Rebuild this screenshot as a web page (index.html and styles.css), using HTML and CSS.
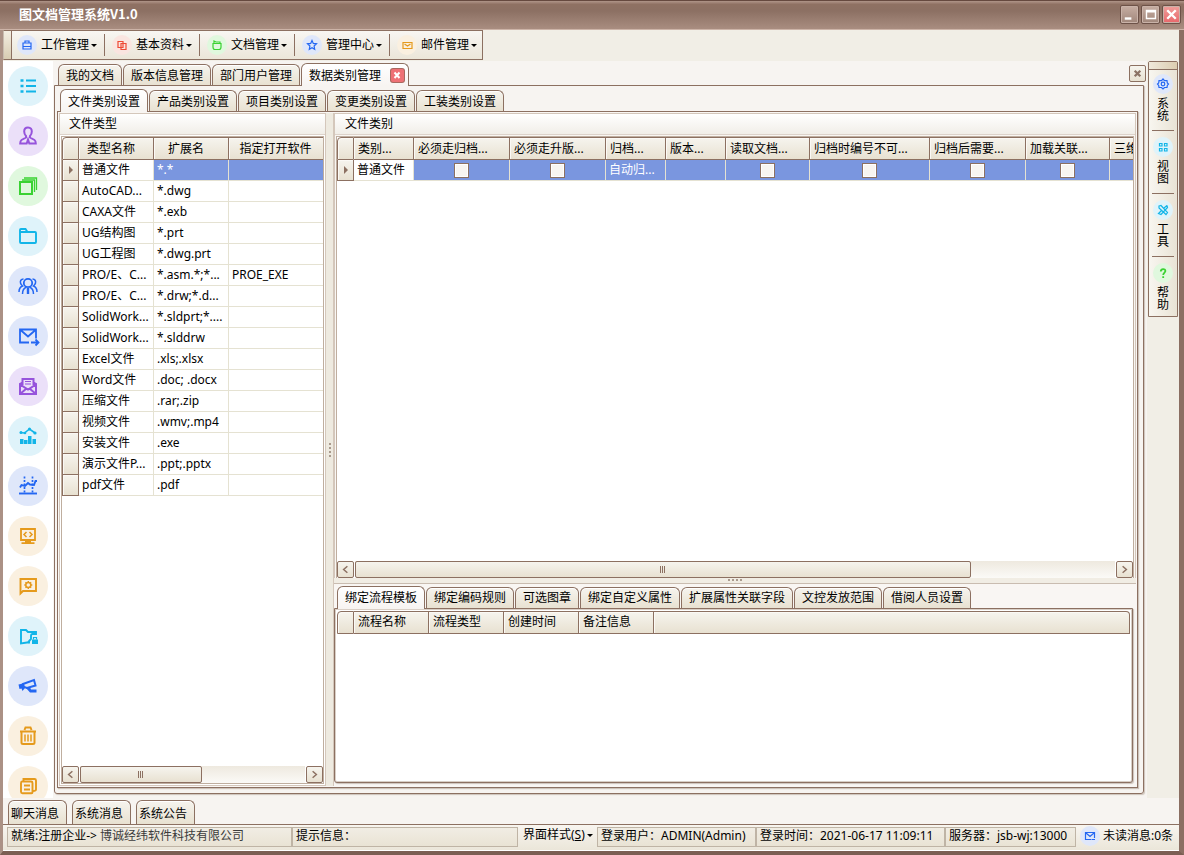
FILE: index.html
```html
<!DOCTYPE html>
<html lang="zh-CN">
<head>
<meta charset="utf-8">
<title>图文档管理系统V1.0</title>
<link rel="stylesheet" href="styles.css">
</head>
<body>
<div class="window">
<header class="titlebar">
  <h1 class="title">图文档管理系统V1.0</h1>
  <button class="winbtn" aria-label="最小化"><svg viewBox="0 0 18 18"><path d="M4 12h7v2.500H4z" fill="#fff"/></svg></button>
  <button class="winbtn" aria-label="最大化"><svg viewBox="0 0 18 18"><path d="M4 4h11v10H4zM5.500 7v5.500h8V7z" fill="#fff" fill-rule="evenodd"/></svg></button>
  <button class="winbtn winbtn-close" aria-label="关闭"><svg viewBox="0 0 18 18"><path d="M4.500 4.500l9 9M13.500 4.500l-9 9" stroke="#fff" stroke-width="2.500"/></svg></button>
</header>

<div class="menurow">
  <nav class="menubar">
    <span class="grip"></span>
    <button class="menu"><span class="dot blue"><svg viewBox="0 0 20 20"><path d="M6 8h8v6H6zM8 8V6h4v2M6 11.500h8"/></svg></span>工作管理<i class="caret"></i></button>
    <button class="menu"><span class="dot red"><svg viewBox="0 0 20 20"><path d="M6 6.500h5v6H6zM9 8.500h5v6H9z"/></svg></span>基本资料<i class="caret"></i></button>
    <button class="menu"><span class="dot green"><svg viewBox="0 0 20 20"><path d="M6 8.500h8v3.500q0 2.500-2 2.500H8q-2 0-2-2.500zM7 8V6l2 1h4v1"/></svg></span>文档管理<i class="caret"></i></button>
    <button class="menu"><span class="dot blue"><svg viewBox="0 0 20 20"><path d="M10 5.500l1.300 2.900 3.200.4-2.400 2.200.6 3.300-2.700-1.600-2.700 1.600.6-3.300-2.400-2.200 3.200-.4z"/></svg></span>管理中心<i class="caret"></i></button>
    <button class="menu"><span class="dot orange"><svg viewBox="0 0 20 20"><path d="M6 7.500h9v6H6zM7.500 9l3 2 3-2"/></svg></span>邮件管理<i class="caret"></i></button>
  </nav>
</div>

<div class="body">
<nav class="side">
  <button class="sico cyan" aria-label="列表"><svg viewBox="0 0 40 40"><path d="M18 14.500h10M18 20h10M18 25.500h10" stroke-width="2.200"/><path d="M12.500 14.500h3M12.500 20h3M12.500 25.500h3" stroke-width="2.600"/></svg></button>
  <button class="sico purple" aria-label="用户"><svg viewBox="0 0 40 40"><path d="M20 11.500c-2.800 0-3.800 1.800-3.800 4 0 2 .8 3.500 1.800 4.500v1.500l-4.500 2.500c-1 .6-1.300 1.500-1.300 3.500h6.500l1.300-4 1.300 4h6.500c0-2-.3-2.900-1.300-3.500L22 21.500V20c1-1 1.800-2.500 1.800-4.500 0-2.200-1-4-3.800-4z" stroke-width="2"/></svg></button>
  <button class="sico green" aria-label="图层"><svg viewBox="0 0 40 40"><path d="M12 16h12v12H12z" stroke-width="2"/><path d="M14 14h12.500v12M16 12h12.500v12" stroke-width="1.300"/></svg></button>
  <button class="sico cyan" aria-label="文件夹"><svg viewBox="0 0 40 40"><path d="M12 26V14q0-1 1-1h4.500l2 3H27q1 0 1 1v9q0 1-1 1H13q-1 0-1-1zM12 16h8" stroke-width="1.900"/></svg></button>
  <button class="sico blue" aria-label="团队"><svg viewBox="0 0 40 40"><circle cx="20" cy="17" r="4.200"/><path d="M14.500 28c0-3.500 1.500-6 4-7M25.500 28c0-3.500-1.500-6-4-7M15.500 13c-2.500 0-3.500 2-3 4 .2 1 1 2 2 3-2 .8-3.500 3-3.500 6M24.500 13c2.500 0 3.500 2 3 4-.2 1-1 2-2 3 2 .8 3.500 3 3.500 6" stroke-width="1.500"/><path d="M20 22v6" stroke-width="2.400"/></svg></button>
  <button class="sico blue" aria-label="发件"><svg viewBox="0 0 40 40"><path d="M28 22.500V13.500H12v13h9M12.500 14l7.500 6.500 7.500-6.500" stroke-width="1.800"/><path d="M23 26.500h7.500M27.500 23.500l3 3-3 3" stroke-width="1.800"/></svg></button>
  <button class="sico purple" aria-label="收件"><svg viewBox="0 0 40 40"><path d="M12 18.500V28h16v-9.500l-8 5zM12 28l6.500-5.500M28 28l-6.500-5.500M14.500 19v-6h11v6M12 18.500l2.500-2.500M28 18.500l-2.500-2.500" stroke-width="2"/><path d="M17 15.500h6M17 18h6" stroke-width="1.100"/></svg></button>
  <button class="sico cyan" aria-label="统计"><svg viewBox="0 0 40 40"><path d="M12 16.500l4.500 0.500 5-4 5.500 4" stroke-width="1.600"/><path class="solid" d="M12 28v-5h3.500v5zM16 28v-4h3.500v4zM20 28v-8h3.500v8zM24.500 28v-5H28v5z"/><circle class="solid" cx="13" cy="16.500" r="1.500"/><circle class="solid" cx="17" cy="17" r="1.300"/><circle class="solid" cx="21.500" cy="13" r="1.500"/><circle class="solid" cx="27" cy="17" r="1.600"/></svg></button>
  <button class="sico blue" aria-label="趋势"><svg viewBox="0 0 40 40"><path d="M11 27.500h18" stroke-width="1.900"/><path d="M12 21.500l1.500-2.500 3.500 1 3-3 2 1.500 4 .5 1.500-4H29" stroke-width="1.900"/><path d="M16.500 10.500v16M24.500 10.500v16" stroke-width="1.700" stroke-dasharray="2 1.500"/></svg></button>
  <button class="sico orange" aria-label="代码"><svg viewBox="0 0 40 40"><path d="M13 13h14v11H13z" stroke-width="1.800"/><path d="M18.500 16L16 18.500l2.500 2.500M21.500 16l2.500 2.500-2.500 2.500" stroke-width="1.500"/><path d="M17 25.500h6M13.500 27.200h13" stroke-width="1.700"/></svg></button>
  <button class="sico orange" aria-label="消息设置"><svg viewBox="0 0 40 40"><path d="M12.500 27.500V13H28v12H15z" stroke-width="1.900"/><circle cx="20.300" cy="19" r="2.500" stroke-width="1.500"/><path d="M20.300 15v1.500M20.300 21.500V23M16.300 19h1.500M22.800 19h1.500M17.500 16.200l1 1M22.100 20.800l1 1M23.100 16.200l-1 1M18.500 20.800l-1 1" stroke-width="1.400"/></svg></button>
  <button class="sico cyan" aria-label="加密文件夹"><svg viewBox="0 0 40 40"><path d="M22 26.500h-3l-6 1V14h5l2 2h8v2h-3.500q-1.500 0-1.500 2v3l-3.500 4" stroke-width="1.900"/><path class="solid" d="M24 23.500h6V28h-6z"/><path d="M25.500 23.500v-2h3v2" stroke-width="1.200"/></svg></button>
  <button class="sico blue" aria-label="监控"><svg viewBox="0 0 40 40"><path d="M15 18l11-4 1.500 5.500L19 22l-3-1z" stroke-width="2"/><path class="solid" d="M10.500 18.500l4.500-1 2 4.500-2.500 3-1-2.500-2 .5zM18 22l4-1 1 2.500h5.500v3H22z"/></svg></button>
  <button class="sico orange" aria-label="回收站"><svg viewBox="0 0 40 40"><path d="M12 15.500h16M16.500 14l1-2.500h5l1 2.500M13.500 16v10.500q0 1.500 1.500 1.500h10q1.500 0 1.500-1.500V16" stroke-width="2"/><path d="M17 18.500v7M20 18.500v7M23 18.500v7" stroke-width="1.500"/></svg></button>
  <button class="sico orange" aria-label="文档"><svg viewBox="0 0 40 40"><path d="M14 15.500h9q1.500 0 1.500 1.500v9.300q0 1-1 1h-9q-1.500 0-1.500-1.500v-8.500q0-1.800 1-1.800zM15.500 15v-2h11q1.500 0 1.500 1.500v9q0 1.500-3 1.500M16 19.500h6M16 23.500h6" stroke-width="1.900"/></svg></button>
</nav>

<main class="work">
  <div class="toprow">
    <div class="tabs">
      <button class="tab">我的文档</button><button class="tab">版本信息管理</button><button class="tab">部门用户管理</button><button class="tab active">数据类别管理<span class="tabx"><svg viewBox="0 0 13 13"><path d="M3.500 3.500l5 5.500M8.500 3.500l-5 5.500" stroke="#fff" stroke-width="2"/></svg></span></button>
    </div>
    <button class="closebtn" aria-label="关闭页签"><svg viewBox="0 0 16 16"><path d="M5 5l6 6M11 5l-6 6" stroke="#8c7365" stroke-width="2.400"/></svg></button>
  </div>
  <section class="page">
    <div class="tabs">
      <button class="tab active">文件类别设置</button><button class="tab">产品类别设置</button><button class="tab">项目类别设置</button><button class="tab">变更类别设置</button><button class="tab">工装类别设置</button>
    </div>
    <div class="panes">
      <section class="left">
        <h2 class="cap">文件类型</h2>
        <div class="gridbox">
          <table class="grid types">
            <colgroup><col class="c17"><col class="c75"><col class="c75"><col></colgroup>
            <thead><tr><th></th><th>类型名称</th><th>扩展名</th><th>指定打开软件</th></tr></thead>
            <tbody>
              <tr class="sel"><th><i class="arrow"></i></th><td class="focus">普通文件</td><td>*.*</td><td></td></tr>
              <tr><th></th><td>AutoCAD...</td><td>*.dwg</td><td></td></tr>
              <tr><th></th><td>CAXA文件</td><td>*.exb</td><td></td></tr>
              <tr><th></th><td>UG结构图</td><td>*.prt</td><td></td></tr>
              <tr><th></th><td>UG工程图</td><td>*.dwg.prt</td><td></td></tr>
              <tr><th></th><td>PRO/E、C...</td><td>*.asm.*;*...</td><td>PROE_EXE</td></tr>
              <tr><th></th><td>PRO/E、C...</td><td>*.drw;*.d...</td><td></td></tr>
              <tr><th></th><td>SolidWork...</td><td>*.sldprt;*....</td><td></td></tr>
              <tr><th></th><td>SolidWork...</td><td>*.slddrw</td><td></td></tr>
              <tr><th></th><td>Excel文件</td><td>.xls;.xlsx</td><td></td></tr>
              <tr><th></th><td>Word文件</td><td>.doc; .docx</td><td></td></tr>
              <tr><th></th><td>压缩文件</td><td>.rar;.zip</td><td></td></tr>
              <tr><th></th><td>视频文件</td><td>.wmv;.mp4</td><td></td></tr>
              <tr><th></th><td>安装文件</td><td>.exe</td><td></td></tr>
              <tr><th></th><td>演示文件P...</td><td>.ppt;.pptx</td><td></td></tr>
              <tr><th></th><td>pdf文件</td><td>.pdf</td><td></td></tr>
            </tbody>
          </table>
          <div class="scroll"><button class="sbtn" aria-label="向左"><svg viewBox="0 0 16 16"><path d="M10 4.500L6 8l4 3.500"/></svg></button><div class="track"><div class="thumb half"><i></i></div></div><button class="sbtn" aria-label="向右"><svg viewBox="0 0 16 16"><path d="M6 4.500L10 8l-4 3.500"/></svg></button></div>
        </div>
      </section>
      <div class="vsplit"><i></i></div>
      <section class="right">
        <div class="upper">
          <h2 class="cap">文件类别</h2>
          <div class="gridbox">
            <table class="grid cats">
              <colgroup><col class="c17"><col class="c60"><col class="c96"><col class="c96"><col class="c60"><col class="c60"><col class="c84"><col class="c120"><col class="c96"><col class="c84"><col></colgroup>
              <thead><tr><th></th><th>类别...</th><th>必须走归档...</th><th>必须走升版...</th><th>归档...</th><th>版本...</th><th>读取文档...</th><th>归档时编号不可...</th><th>归档后需要...</th><th>加载关联...</th><th>三维</th></tr></thead>
              <tbody><tr class="sel"><th><i class="arrow"></i></th><td class="focus">普通文件</td><td><input type="checkbox" aria-label="必须走归档"></td><td><input type="checkbox" aria-label="必须走升版"></td><td>自动归...</td><td></td><td><input type="checkbox" aria-label="读取文档"></td><td><input type="checkbox" aria-label="归档时编号不可"></td><td><input type="checkbox" aria-label="归档后需要"></td><td><input type="checkbox" aria-label="加载关联"></td><td></td></tr></tbody>
            </table>
            <div class="scroll"><button class="sbtn" aria-label="向左"><svg viewBox="0 0 16 16"><path d="M10 4.500L6 8l4 3.500"/></svg></button><div class="track"><div class="thumb wide"><i></i></div></div><button class="sbtn" aria-label="向右"><svg viewBox="0 0 16 16"><path d="M6 4.500L10 8l-4 3.500"/></svg></button></div>
          </div>
        </div>
        <div class="hsplit"><i></i></div>
        <div class="lower">
          <div class="tabs">
            <button class="tab active">绑定流程模板</button><button class="tab">绑定编码规则</button><button class="tab">可选图章</button><button class="tab">绑定自定义属性</button><button class="tab">扩展属性关联字段</button><button class="tab">文控发放范围</button><button class="tab">借阅人员设置</button>
          </div>
          <div class="flow">
            <table class="grid flows">
              <colgroup><col class="c17"><col class="c75"><col class="c75"><col class="c75"><col class="c75"><col></colgroup>
              <thead><tr><th></th><th>流程名称</th><th>流程类型</th><th>创建时间</th><th>备注信息</th><th></th></tr></thead>
            </table>
          </div>
        </div>
      </section>
    </div>
  </section>
</main>

<aside class="rail">
  <nav class="railbar">
    <span class="railgrip"></span>
    <button class="rbtn"><span class="dot blue"><svg viewBox="0 0 20 20"><path d="M10 5l1.500 1.700h2.500l.3 2.300L15.500 10l-1.200 1.500-.3 2h-2.500L10 15l-1.500-1.500H6l-.3-2L4.500 10l1.200-1L6 6.700h2.500z"/><circle cx="10" cy="10" r="1.800"/></svg></span><span class="vert">系统</span></button>
    <button class="rbtn"><span class="dot cyan"><svg viewBox="0 0 20 20"><path d="M6.500 6.500h2.500V9H6.500zM11.500 6.500H14V9h-2.500zM6.500 11.500h2.500V14H6.500zM11.500 11.500H14V14h-2.500z"/></svg></span><span class="vert">视图</span></button>
    <button class="rbtn"><span class="dot cyan"><svg viewBox="0 0 20 20"><path d="M6 6l2-.5 6.500 7-1.500 2L6 8zM14 5.500l.5 2L8 14.500l-2.500-1 3-3M11 8l3-2.500"/></svg></span><span class="vert">工具</span></button>
    <button class="rbtn"><span class="dot green"><svg viewBox="0 0 20 20"><path d="M7.800 8.500c0-3 4.600-3 4.600-.5 0 1.500-2.200 1.700-2.200 4M10.200 13.200V15" stroke-width="1.800"/></svg></span><span class="vert">帮助</span></button>
  </nav>
</aside>
</div>

<div class="msgs">
  <button class="tab">聊天消息</button><button class="tab">系统消息</button><button class="tab">系统公告</button>
</div>
<footer class="status">
  <span class="cell s1">就绪:注册企业-&gt; <span class="corp">博诚经纬软件科技有限公司</span></span>
  <span class="cell s2">提示信息：</span>
  <button class="skin">界面样式(<u>S</u>)<i class="caret"></i></button>
  <span class="cell s3">登录用户：ADMIN(Admin)</span>
  <span class="cell s4">登录时间：2021-06-17 11:09:11</span>
  <span class="cell s5">服务器：jsb-wj:13000</span>
  <button class="unread"><span class="dot blue"><svg viewBox="0 0 20 20"><path d="M14.500 12V6.500h-9v7h6M6 7l4 3.500L14 7M12 13.500h3"/></svg></span>未读消息:0条</button>
</footer>
</div>
</body>
</html>
```

FILE: styles.css
```css
* { box-sizing: border-box; }
:root {
  --line: #8c7061;
  --soft: #c9bcb0;
  --pale: #f7f4f1;
  --beige: #f1eee6;
  --face: linear-gradient(#f6f4ee, #e8e1d1);
}
body {
  margin: 0;
  height: 100vh;
  overflow: hidden;
  color: #000;
  font: 12px/16px "Noto Sans", "Noto Sans CJK SC", sans-serif;
}
button { font: inherit; color: inherit; margin: 0; padding: 0; border: 0; background: none; white-space: nowrap; }
h1, h2 { margin: 0; }
svg { display: block; fill: none; stroke: currentColor; }
.solid { fill: currentColor; stroke: none; }

.window {
  display: flex;
  flex-direction: column;
  height: 100%;
  background: var(--beige);
  border: solid #8b6e62;
  border-width: 0 5px 4px 3px;
  border-left-color: #ab9185;
  border-bottom-color: #7b5e53;
}

.titlebar {
  flex: none;
  display: flex;
  align-items: center;
  gap: 2px;
  height: 30px;
  margin: 0 -5px 0 -3px;
  padding: 0 3px 2px 19px;
  border-top: 1px solid #66493f;
  border-bottom: 1px solid #cdb4a8;
  background: linear-gradient(#b09589, #8f7163 12%, #8c7063 35%, #a98d80);
}
.title { flex: 1; color: #fff; font: bold 13px/18px "Noto Sans CJK SC", sans-serif; }
.winbtn { width: 19px; height: 19px; border: 1px solid #6d5248; border-radius: 2px; background: linear-gradient(#c6ada2, #a1877b); box-shadow: inset 0 0 0 1px #c9b2a8; }
.winbtn svg { width: 17px; height: 17px; stroke: none; }
.winbtn-close { background: linear-gradient(#f0a09c, #e8666a); }

.menurow { flex: none; height: 31px; display: flex; }
.menubar { display: flex; height: 30px; border: 1px solid var(--line); border-left-color: var(--soft); background: linear-gradient(#f8f6f2, #ebe6d9); }
.grip { width: 8px; border-right: 1px solid var(--line); background: linear-gradient(#f3eee2, #d8ccb2); }
.menu { display: flex; align-items: center; width: 95px; padding-left: 7px; position: relative; }
.menu:nth-child(2) { width: 93px; padding-left: 5px; }
.menu:last-child { width: 92px; }
.menu + .menu::before { content: ""; position: absolute; left: -1px; top: 3px; bottom: 3px; width: 1px; background: var(--line); }
.menu .dot { margin-right: 4px; }
.caret { margin-left: 2px; border: solid transparent; border-width: 3px 3px 0; border-top-color: #000; }
.dot { flex: none; width: 20px; height: 20px; border-radius: 50%; }
.dot svg { width: 20px; height: 20px; stroke-width: 1.2; }
.blue { color: #2467f2; background: #dfe7fa; }
.red { color: #ee4a35; background: #fae5e0; }
.green { color: #3ad232; background: #e0f8de; }
.orange { color: #e59a1c; background: #faf0e0; }
.cyan { color: #12b5e8; background: #dff3fa; }
.purple { color: #9654dc; background: #ebe0f9; }

.body { flex: 1; min-height: 0; display: flex; }
.side { flex: none; width: 50px; padding: 5px; display: flex; flex-direction: column; gap: 10px; overflow: hidden; background: #fff; }
.sico { flex: none; width: 40px; height: 40px; border-radius: 50%; }
.sico svg { width: 40px; height: 40px; stroke-width: 1.8; }

.work { flex: 1; min-width: 0; display: flex; flex-direction: column; padding: 0 3px 4px 1px; background: var(--pale); }
.toprow { display: flex; justify-content: space-between; height: 24px; padding: 0 0 0 4px; }
.closebtn { width: 17px; height: 17px; margin: 4px -2px 0 0; border: 1px solid var(--line); border-radius: 2px; background: var(--face); }
.closebtn svg { width: 15px; height: 15px; }

.tabs { display: flex; align-items: flex-end; gap: 1px; }
.tab { height: 21px; padding: 1px 7px 0; border: 1px solid var(--line); border-bottom: 0; border-radius: 6px 6px 0 0; background: var(--face); box-shadow: inset 0 1px #fff; }
.tab.active { position: relative; height: 23px; margin-bottom: -1px; background: linear-gradient(#fff, var(--pale)); }
.toprow .tab.active { display: flex; align-items: center; gap: 10px; padding-right: 4px; }
.tabx { width: 13px; height: 13px; border-radius: 2px; background: #ee7175; box-shadow: 0 0 0 1px #a8685f; }

.page {
  flex: 1;
  min-height: 0;
  display: flex;
  flex-direction: column;
  padding: 2px 5px 5px 2px;
  border: 1px solid var(--line);
  border-radius: 0 0 3px 3px;
  box-shadow: 1px 1px 1px #cdc3ba;
}
.page > .tabs { flex: none; height: 23px; padding-left: 3px; }
.panes { flex: 1; min-height: 0; display: flex; padding: 1px; border: 1px solid var(--line); box-shadow: 1px 1px 1px #cdc3ba; background: #f9f6f3; }
.left { flex: none; width: 267px; display: flex; flex-direction: column; border: 1px solid #d4c7bb; background: #fff; }
.cap { flex: none; height: 21px; padding: 2px 9px; font: inherit; background: linear-gradient(#fff, #f1eee8); border-bottom: 1px solid #ddd3ca; }
.gridbox { flex: 1; min-height: 0; display: flex; flex-direction: column; justify-content: space-between; overflow: hidden; margin: 1px; padding: 0; border: 1px solid #bfae9f; background: #fff; }
.vsplit { flex: none; width: 8px; display: flex; align-items: center; justify-content: center; background: #eeeae0; border-right: 1px solid #d4c7bb; }
.vsplit i { width: 2px; height: 14px; background: repeating-linear-gradient(#a99a8d 0 2px, transparent 2px 4px); }
.right { flex: 1; min-width: 0; display: flex; flex-direction: column; }
.upper { flex: 467 1 0; min-height: 0; display: flex; flex-direction: column; border: solid #d4c7bb; border-width: 1px 1px 0; }
.upper .gridbox { margin-bottom: 0; border-bottom: 0; }
.hsplit { flex: none; height: 6px; display: flex; align-items: center; justify-content: center; background: #f1ede4; border-bottom: 1px solid #c9bcb0; }
.hsplit i { width: 14px; height: 2px; background: repeating-linear-gradient(90deg, #a99a8d 0 2px, transparent 2px 4px); }
.lower { flex: 200 1 0; min-height: 0; display: flex; flex-direction: column; padding: 1px 3px 3px 0; }
.lower .tabs { flex: none; height: 23px; padding-left: 3px; }
.lower .cap, .upper .cap { padding-left: 10px; }
.flow { flex: 1; min-height: 0; padding: 2px; border: 1px solid var(--line); border-radius: 0 0 3px 3px; background: #fff; box-shadow: inset 0 0 0 1px #d9cfc6, 1px 1px 1px #cdc3ba; }

.grid { width: 100%; flex: none; table-layout: fixed; border-collapse: separate; border-spacing: 0; }
.c17 { width: 17px; }
.c60 { width: 60px; }
.c75 { width: 75px; }
.c84 { width: 84px; }
.c96 { width: 96px; }
.c120 { width: 120px; }
.grid th, .grid td { height: 21px; padding: 0 0 0 3px; overflow: hidden; white-space: nowrap; text-align: left; font-weight: normal; line-height: 16px; border: solid #e5e2d2; border-width: 0 1px 1px 0; }
.grid th { border-color: var(--line); background: var(--face); box-shadow: inset 1px 1px #fbf9f5; }
.grid thead th { height: 23px; padding-left: 4px; border-top: 1px solid var(--line); }
.grid th:first-child { padding: 0; border-left: 1px solid var(--line); }
.grid thead th:first-child { border-top-left-radius: 4px; }
.grid tr > :last-child { border-right-width: 0; }
.types thead th { text-align: center; padding: 0 10px 0 0; }
.types thead th:last-child { padding-right: 1px; }
.flows thead tr > :last-child { border-right-width: 1px; border-top-right-radius: 4px; }
.sel td { color: #fff; background: #7a96df; }
.sel .focus { color: #000; background: #fff; }
.arrow { display: block; width: 0; margin-left: 6px; border: solid transparent; border-width: 4px 0 4px 4px; border-left-color: var(--line); }
.grid input { appearance: none; display: block; width: 15px; height: 15px; margin: 0 auto; border: 1px solid var(--line); background: #f8f5f1; box-shadow: inset 0 0 0 1px #fff; }
.grid td:has(input) { padding: 0; }

.scroll { flex: none; display: flex; height: 17px; gap: 1px; }
.sbtn { flex: none; width: 17px; border: 1px solid var(--line); border-radius: 2px; background: var(--face); }
.sbtn svg { width: 15px; height: 15px; stroke: var(--line); stroke-width: 1.6; }
.track { flex: 1; display: flex; background: linear-gradient(#eee9df, #fbfaf7); }
.thumb { display: flex; align-items: center; justify-content: center; border: 1px solid var(--line); border-radius: 2px; background: var(--face); }
.thumb.half { width: 54%; }
.thumb.wide { width: 81%; }
.thumb i { width: 5px; height: 7px; background: repeating-linear-gradient(90deg, var(--line) 0 1px, transparent 1px 2px); }

.rail { flex: none; width: 32px; }
.railbar { display: flex; flex-direction: column; width: 30px; margin-left: 1px; border: 1px solid var(--line); border-radius: 2px 2px 0 0; background: linear-gradient(90deg, #f8f6f0, #e9e3d5); }
.railgrip { height: 8px; border-bottom: 1px solid var(--line); background: linear-gradient(90deg, #f0e9db, #dccdb0); }
.rbtn { display: flex; flex-direction: column; align-items: center; gap: 3px; height: 60px; margin: 0 3px; padding-top: 4px; }
.rbtn + .rbtn { border-top: 1px solid var(--line); height: 63px; padding-top: 6px; }
.rbtn:last-child { height: 60px; }
.vert { writing-mode: vertical-rl; line-height: 16px; margin-right: 3px; }

.msgs { flex: none; display: flex; gap: 5px; height: 26px; padding: 2px 5px 0; background: var(--pale); }
.msgs .tab { height: 24px; padding: 2px 7px 0 2px; width: 59px; text-align: left; }
.status { flex: none; display: flex; height: 27px; padding: 2px 0 3px 4px; border-top: 1px solid var(--line); border-bottom: 1px solid #fff; background: linear-gradient(#f8f5f0, #ebe6d9); white-space: nowrap; }
.cell { flex: none; padding: 0 3px; border: 1px solid #bfb4a5; background: linear-gradient(#f1ede4, #e9e3d4); }
.s1 { width: 285px; }
.s2 { flex: 1; }
.s3 { width: 159px; }
.s4 { width: 189px; }
.s5 { width: 131px; }
.corp { color: #3c3c3c; }
.skin { width: 79px; padding: 0 0 4px 5px; display: flex; align-items: center; }
.unread { display: flex; align-items: center; gap: 3px; width: 103px; padding-left: 4px; height: 18px; }
```
